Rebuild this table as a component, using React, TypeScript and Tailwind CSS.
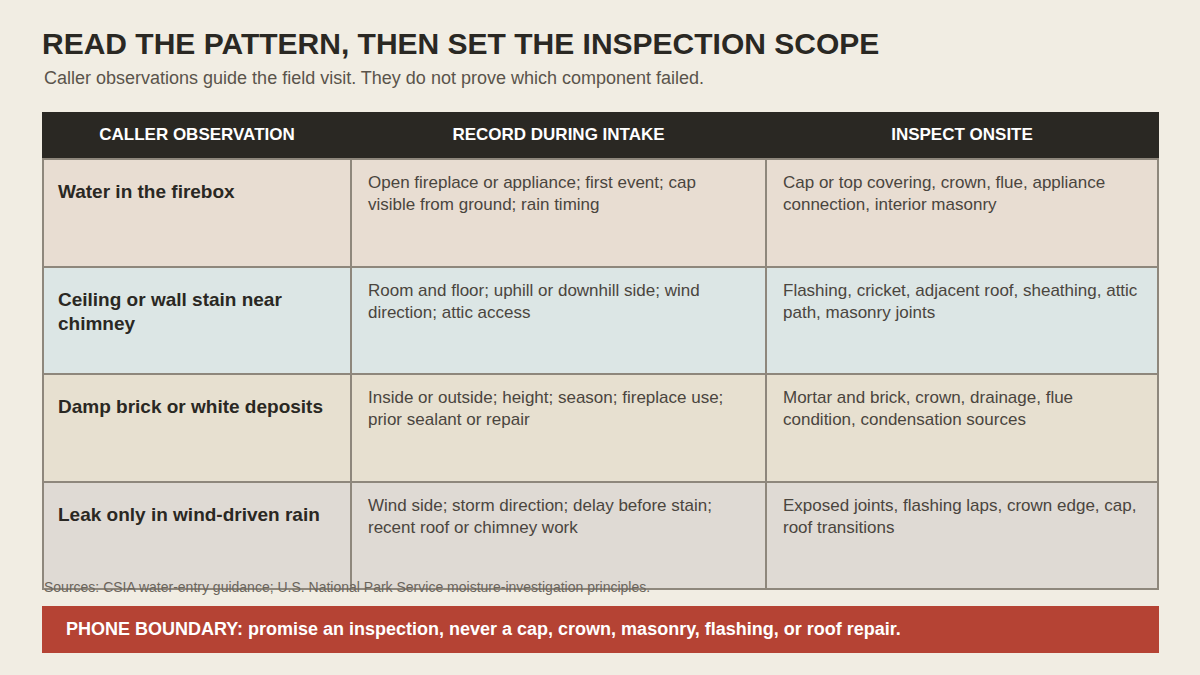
import React from 'react';

interface Row {
  label: string;
  intake: string;
  inspect: string;
  bg: string;
}

const rows: Row[] = [
  {
    label: 'Water in the firebox',
    intake: 'Open fireplace or appliance; first event; cap visible from ground; rain timing',
    inspect: 'Cap or top covering, crown, flue, appliance connection, interior masonry',
    bg: 'bg-[#e8ddd2]',
  },
  {
    label: 'Ceiling or wall stain near chimney',
    intake: 'Room and floor; uphill or downhill side; wind direction; attic access',
    inspect: 'Flashing, cricket, adjacent roof, sheathing, attic path, masonry joints',
    bg: 'bg-[#dce6e5]',
  },
  {
    label: 'Damp brick or white deposits',
    intake: 'Inside or outside; height; season; fireplace use; prior sealant or repair',
    inspect: 'Mortar and brick, crown, drainage, flue condition, condensation sources',
    bg: 'bg-[#e7e0d0]',
  },
  {
    label: 'Leak only in wind-driven rain',
    intake: 'Wind side; storm direction; delay before stain; recent roof or chimney work',
    inspect: 'Exposed joints, flashing laps, crown edge, cap, roof transitions',
    bg: 'bg-[#dfdad4]',
  },
];

const cols = 'grid grid-cols-[306px_413px_390px] gap-x-[2px]';

export default function App() {
  return (
    <div
      className="w-[1200px] h-[675px] bg-[#f1ede3] px-[42px] pt-[26px] overflow-hidden"
      style={{ fontFamily: '"Liberation Sans", Arial, sans-serif' }}
    >
      {/* Header */}
      <h1 className="text-[30px] leading-[36px] font-bold text-[#2a2823]">
        READ THE PATTERN, THEN SET THE INSPECTION SCOPE
      </h1>
      <p className="ml-[2px] mt-[5px] text-[18px] leading-[22px] text-[#5a544b]">
        Caller observations guide the field visit. They do not prove which component failed.
      </p>

      {/* Table */}
      <div className="mt-[23px] w-[1117px]">
        <div className={`${cols} h-[46px] bg-[#2a2823] px-[2px] items-center`}>
          <div className="text-center text-white font-bold text-[17px]">CALLER OBSERVATION</div>
          <div className="text-center text-white font-bold text-[17px]">RECORD DURING INTAKE</div>
          <div className="text-center text-white font-bold text-[17px]">INSPECT ONSITE</div>
        </div>
        <div className="h-[432px] border-2 border-[#8e877c] bg-[#8e877c] grid grid-rows-4 gap-y-[2px]">
          {rows.map((r) => (
            <div key={r.label} className={cols}>
              <div className={`${r.bg} pl-[14px] pr-[12px] pt-[20px] text-[19px] leading-[24px] font-bold text-[#2a2823]`}>
                {r.label}
              </div>
              <div className={`${r.bg} pl-[16px] pr-[20px] pt-[12px] text-[17px] leading-[22px] text-[#4a453e]`}>
                {r.intake}
              </div>
              <div className={`${r.bg} pl-[16px] pr-[18px] pt-[12px] text-[17px] leading-[22px] text-[#4a453e]`}>
                {r.inspect}
              </div>
            </div>
          ))}
        </div>
      </div>

      {/* Sources */}
      <p className="relative mt-[-11px] ml-[2px] text-[14px] leading-[16px] text-[#6b655c]">
        Sources: CSIA water-entry guidance; U.S. National Park Service moisture-investigation principles.
      </p>

      {/* Banner */}
      <div className="mt-[11px] w-[1117px] h-[47px] bg-[#b54334] flex items-center px-[24px]">
        <p className="text-white text-[18px] font-bold">
          PHONE BOUNDARY: promise an inspection, never a cap, crown, masonry, flashing, or roof repair.
        </p>
      </div>
    </div>
  );
}
